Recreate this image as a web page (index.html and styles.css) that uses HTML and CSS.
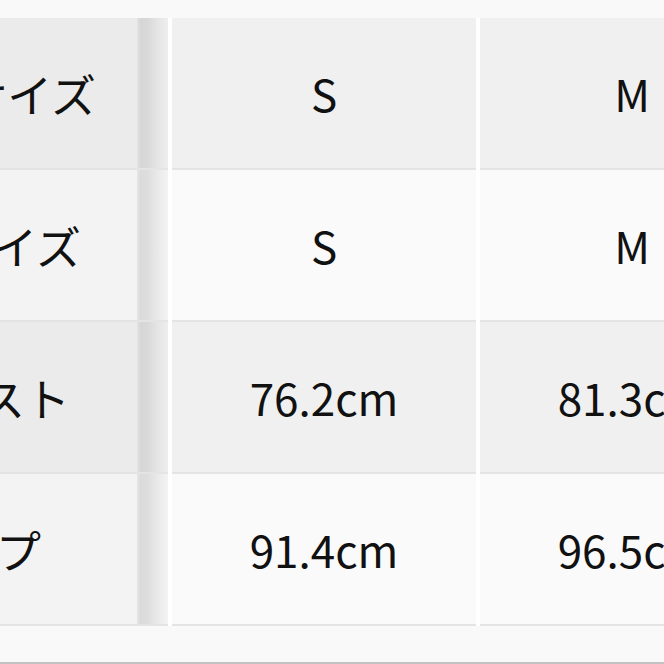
FILE: index.html
```html
<!DOCTYPE html>
<html lang="ja">
<head>
<meta charset="utf-8">
<link rel="stylesheet" href="styles.css">
</head>
<body>
<div class="page">
  <div class="table">
    <div class="row row-odd">
      <div class="label label-1"><span>サイズ</span></div>
      <div class="shade"></div>
      <div class="gap"></div>
      <div class="cell">S</div>
      <div class="gap"></div>
      <div class="cell">M</div>
    </div>
    <div class="row row-even">
      <div class="label label-2"><span>サイズ</span></div>
      <div class="shade"></div>
      <div class="gap"></div>
      <div class="cell">S</div>
      <div class="gap"></div>
      <div class="cell">M</div>
    </div>
    <div class="row row-odd">
      <div class="label label-3"><span>バスト</span></div>
      <div class="shade"></div>
      <div class="gap"></div>
      <div class="cell">76.2cm</div>
      <div class="gap"></div>
      <div class="cell">81.3cm</div>
    </div>
    <div class="row row-even">
      <div class="label label-4"><span>ヒップ</span></div>
      <div class="shade"></div>
      <div class="gap"></div>
      <div class="cell">91.4cm</div>
      <div class="gap"></div>
      <div class="cell">96.5cm</div>
    </div>
  </div>
  <div class="bottom-line"></div>
</div>
</body>
</html>
```
FILE: styles.css
```css
html, body {
  margin: 0;
  padding: 0;
  background: #f9f9f9;
  overflow: hidden;
}
.page {
  width: 664px;
  height: 664px;
  overflow: hidden;
  display: flex;
  flex-direction: column;
  font-family: "Noto Sans CJK JP", "Noto Sans", sans-serif;
  color: #111;
}
.table {
  margin-top: 18px;
  display: flex;
  flex-direction: column;
}
.row {
  display: flex;
  height: 152px;
  flex: none;
}
.label, .shade, .cell {
  box-sizing: border-box;
  height: 152px;
  border-bottom: 2px solid #e4e4e4;
  flex: none;
}
.label {
  width: 137px;
  overflow: hidden;
  display: flex;
  align-items: center;
  justify-content: flex-end;
  font-size: 45px;
  white-space: nowrap;
}
.label-1 { padding-right: 41px; }
.label-2 { padding-right: 56px; }
.label-3 { padding-right: 67px; }
.label-4 { padding-right: 96px; }
.shade {
  width: 31px;
}
.gap {
  width: 4px;
  background: #ffffff;
  flex: none;
}
.cell {
  width: 304px;
  display: flex;
  align-items: center;
  justify-content: center;
  font-size: 44px;
  white-space: nowrap;
}
.row-odd .label { background: #ebebeb; }
.row-even .label { background: #f3f3f3; }
.row-odd .cell { background: #f0f0f0; }
.row-even .cell { background: #fafafa; }
.row-odd .shade {
  background: linear-gradient(to right, #e3e3e3 0, #d6d6d6 12%, #d9d9d9 35%, #e6e6e6 70%, #eeeeee 100%);
}
.row-even .shade {
  background: linear-gradient(to right, #e6e6e6 0, #dadada 12%, #dedede 35%, #ebebeb 70%, #f3f3f3 100%);
}
.bottom-line {
  margin-top: auto;
  height: 2px;
  background: #c2c2c2;
  flex: none;
}
```
